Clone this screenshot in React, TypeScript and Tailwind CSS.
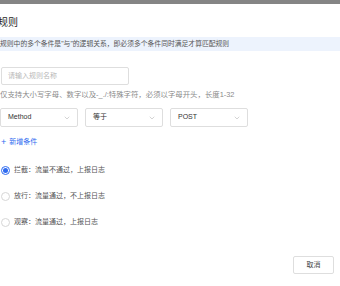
import { ChevronDown } from 'lucide-react'

const conditions = ['Method', '等于', 'POST']

const actions = [
  { label: '拦截：流量不通过，上报日志', checked: true },
  { label: '放行：流量通过，不上报日志', checked: false },
  { label: '观察：流量通过，上报日志', checked: false },
]

function Radio({ checked }: { checked: boolean }) {
  return checked ? (
    <span className="w-[9px] h-[9px] rounded-full border border-[#2f6bf0] flex items-center justify-center bg-white">
      <span className="w-[5px] h-[5px] rounded-full bg-[#2f6bf0]" />
    </span>
  ) : (
    <span className="w-[9px] h-[9px] rounded-full border border-[#d6d6d6] bg-white" />
  )
}

export default function App() {
  return (
    <div
      className="w-[340px] h-[286px] overflow-hidden bg-white flex flex-col"
      style={{ fontFamily: '"Liberation Sans", "Noto Sans CJK SC", sans-serif' }}
    >
      <div className="h-[4px] bg-[#858585]" />

      <div className="flex flex-col pl-px">
        <h2 className="mt-[12px] -ml-[3px] text-[10px] leading-[14px] text-[#262626]">规则</h2>

        <div className="mt-[7px] -ml-px h-[14px] bg-[#edf3fd] flex items-center text-[6.8px] text-[#555]">
          规则中的多个条件是"与"的逻辑关系，即必须多个条件同时满足才算匹配规则
        </div>

        <div className="mt-[16px] w-[128px] h-[18px] border border-[#dedede] rounded-[2px] flex items-center px-[6px] text-[7px] text-[#b8b8b8]">
          请输入规则名称
        </div>

        <p className="mt-[5px] -ml-px text-[7.4px] leading-[10px] text-[#8a8a8a]">
          仅支持大小写字母、数字以及-_./:特殊字符，必须以字母开头，长度1-32
        </p>

        <div className="mt-[8px] -ml-px flex gap-[7px]">
          {conditions.map((c) => (
            <div
              key={c}
              className="w-[78px] h-[19px] border border-[#dedede] rounded-[2px] flex items-center justify-between pl-[7px] pr-[6px] text-[7px] text-[#333]"
            >
              <span>{c}</span>
              <ChevronDown className="w-[8px] h-[8px] text-[#a8a8a8]" strokeWidth={1.5} />
            </div>
          ))}
        </div>

        <div className="mt-[10px] flex items-center gap-[3px] h-[10px] text-[7px] text-[#2f6bf0]">
          <span className="text-[9px] leading-[10px]">+</span>
          <span>新增条件</span>
        </div>

        <div className="mt-[18px] flex flex-col gap-[16px]">
          {actions.map((a) => (
            <div key={a.label} className="flex items-center gap-[4px] h-[10px] text-[7px] text-[#555]">
              <Radio checked={a.checked} />
              <span>{a.label}</span>
            </div>
          ))}
        </div>
      </div>

      <div className="mt-[29px] flex justify-end pr-[6px]">
        <button className="w-[41px] h-[18px] border border-[#dedede] rounded-[2px] bg-white text-[7px] text-[#444] flex items-center justify-center">
          取消
        </button>
      </div>
    </div>
  )
}
